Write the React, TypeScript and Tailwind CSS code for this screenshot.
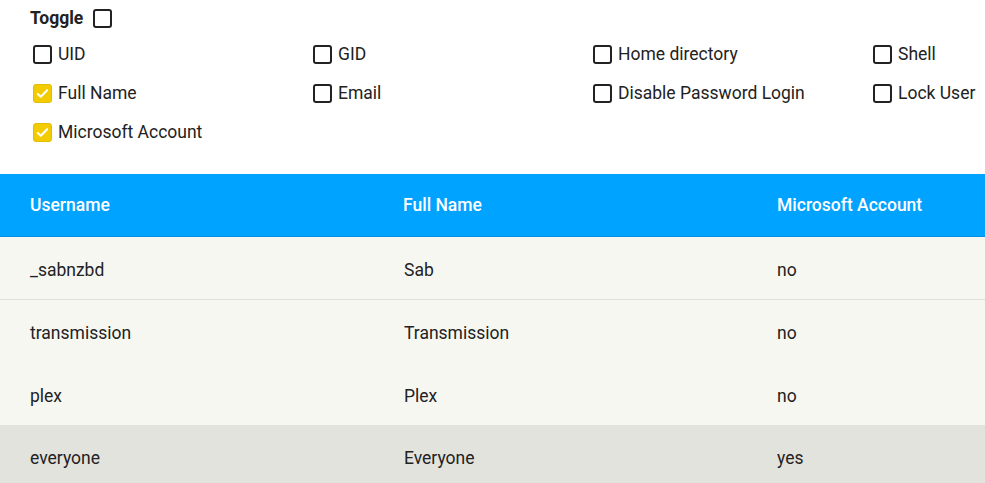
import React from "react";

const OPTIONS: { label: string; checked: boolean }[] = [
  { label: "UID", checked: false },
  { label: "GID", checked: false },
  { label: "Home directory", checked: false },
  { label: "Shell", checked: false },
  { label: "Full Name", checked: true },
  { label: "Email", checked: false },
  { label: "Disable Password Login", checked: false },
  { label: "Lock User", checked: false },
  { label: "Microsoft Account", checked: true },
];

const ROWS = [
  { user: "_sabnzbd", name: "Sab", ms: "no", border: true },
  { user: "transmission", name: "Transmission", ms: "no", border: false },
  { user: "plex", name: "Plex", ms: "no", border: false },
  { user: "everyone", name: "Everyone", ms: "yes", border: false, hover: true },
];

function Box({ checked }: { checked: boolean }) {
  if (checked) {
    return (
      <span className="flex h-[19px] w-[19px] shrink-0 items-center justify-center rounded-[3px] border border-[#e2bd00] bg-[#f2cb00]">
        <svg viewBox="0 0 16 16" className="h-[15px] w-[15px]" fill="none" stroke="white" strokeWidth="2.2" strokeLinecap="round" strokeLinejoin="round">
          <path d="M3 8.5l3.2 3L13 4.5" />
        </svg>
      </span>
    );
  }
  return <span className="h-[19px] w-[19px] shrink-0 rounded-[3px] border-2 border-[#222]" />;
}

export default function App() {
  return (
    <div className="h-[483px] w-[985px] overflow-hidden bg-white text-[17.5px] text-[#222]" style={{ fontFamily: "Roboto, 'Liberation Sans', sans-serif" }}>
      <div className="px-[30px] pt-[6px]">
        <div className="flex h-[24px] items-center gap-[10px]">
          <span className="font-bold">Toggle</span>
          <Box checked={false} />
        </div>
        <div className="mt-[14px] grid grid-cols-[280px_280px_280px_280px] gap-y-[19px] pl-[3px]">
          {OPTIONS.map((o) => (
            <label key={o.label} className="flex h-[20px] items-center gap-[6px] whitespace-nowrap">
              <Box checked={o.checked} />
              <span>{o.label}</span>
            </label>
          ))}
        </div>
      </div>
      <div className="mt-[32px] w-[1120px]">
        <div className="grid h-[63px] grid-cols-[373px_373px_374px] items-center border-b border-[#0091e6] bg-[#00a3ff] font-medium text-white">
          <div className="pl-[30px]">Username</div>
          <div className="pl-[30px]">Full Name</div>
          <div className="pl-[31px]">Microsoft Account</div>
        </div>
        {ROWS.map((r) => (
          <div
            key={r.user}
            className={
              "grid h-[62.5px] grid-cols-[373px_373px_374px] items-center pt-[5px] " +
              (r.hover ? "bg-[#e3e3de]" : "bg-[#f7f7f2]") +
              (r.border ? " border-b border-[#e0e0da]" : "")
            }
          >
            <div className="pl-[30px]">{r.user}</div>
            <div className="pl-[31px]">{r.name}</div>
            <div className="pl-[31px]">{r.ms}</div>
          </div>
        ))}
      </div>
    </div>
  );
}
